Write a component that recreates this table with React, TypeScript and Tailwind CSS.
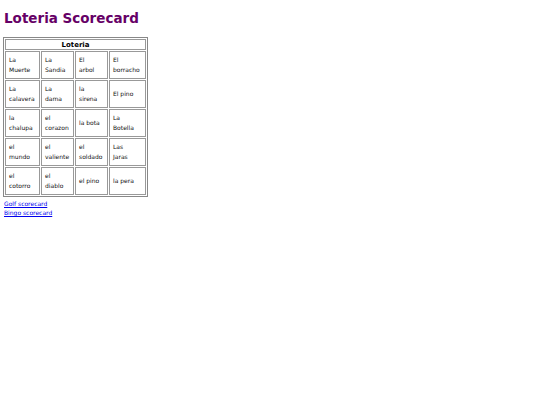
const rows = [
  [["La", "Muerte"], ["La", "Sandia"], ["El", "arbol"], ["El", "borracho"]],
  [["La", "calavera"], ["La", "dama"], ["la", "sirena"], ["El pino"]],
  [["la", "chalupa"], ["el", "corazon"], ["la bota"], ["La", "Botella"]],
  [["el", "mundo"], ["el", "valiente"], ["el", "soldado"], ["Las", "Jaras"]],
  [["el", "cotorro"], ["el", "diablo"], ["el pino"], ["la pera"]],
];

const widths = ["w-[35px]", "w-[33px]", "w-[33px]", "w-[37px]"];

export default function App() {
  return (
    <div className="w-[540px] h-[405px] bg-white px-[3px] pt-[10px]" style={{ fontFamily: '"DejaVu Sans", sans-serif' }}>
      <h1 className="text-[#660066] text-[13.5px] font-black leading-[17px] mb-[10px] pl-[1px]" style={{ fontFamily: '"DejaVu Sans", sans-serif' }}>
        Loteria Scorecard
      </h1>
      <table className="border border-[#888888] border-separate border-spacing-[1px] text-[6px] text-black">
        <thead>
          <tr>
            <th colSpan={4} className="border border-[#999999] text-[7px] font-bold leading-[8px] h-[11px] p-0">
              Loteria
            </th>
          </tr>
        </thead>
        <tbody>
          {rows.map((row, i) => (
            <tr key={i}>
              {row.map((cell, j) => (
                <td key={j} className={`${widths[j]} h-[28px] border border-[#999999] px-[3px] align-middle leading-[10px] text-[#111111]`}>
                  {cell.map((line, k) => (
                    <div key={k}>{line}</div>
                  ))}
                </td>
              ))}
            </tr>
          ))}
        </tbody>
      </table>
      <div className="text-[6px] leading-[9px] pl-[1px] mt-[2px]">
        <a href="#" className="text-[#0000ee] underline block">Golf scorecard</a>
        <a href="#" className="text-[#0000ee] underline block">Bingo scorecard</a>
      </div>
    </div>
  );
}
